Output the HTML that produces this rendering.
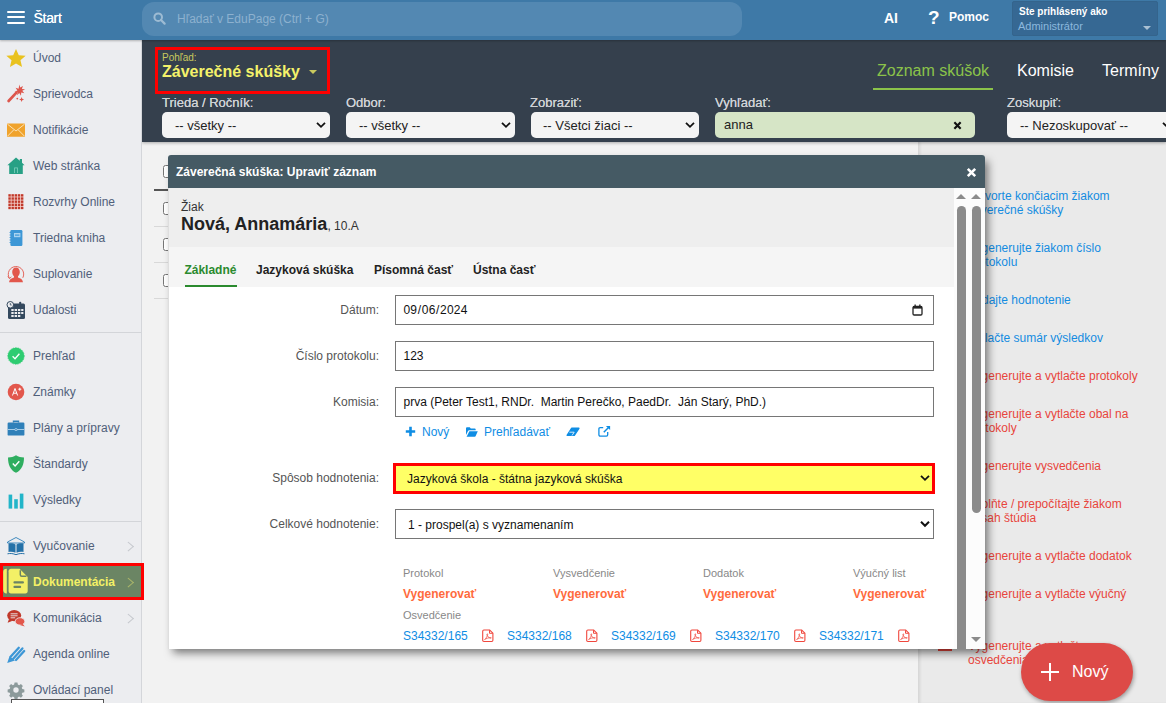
<!DOCTYPE html>
<html lang="sk">
<head>
<meta charset="utf-8">
<title>EduPage - Záverečné skúšky</title>
<style>
*{box-sizing:border-box}
html,body{margin:0;padding:0}
body{width:1166px;height:703px;overflow:hidden;position:relative;background:#f2f2f2;font-family:"Liberation Sans",Arial,sans-serif;font-size:12px;color:#333}
.abs{position:absolute}
/* top bar */
#top{position:absolute;left:0;top:0;width:1166px;height:40px;background:#3e79a7;z-index:5;box-shadow:0 1px 2px rgba(0,0,0,.25)}
#top .ham i{position:absolute;left:6.5px;width:18px;height:2px;background:#fff;border-radius:1px}
#top .start{position:absolute;left:33.5px;top:10px;font-size:14px;color:#fff;letter-spacing:-.3px;text-shadow:0 0 .6px #fff}
#search{position:absolute;left:142px;top:2px;width:600px;height:34px;border-radius:12px;background:#5388b2}
#search span{position:absolute;left:35px;top:10px;font-size:12px;color:#8db1cf}
#top .ai{position:absolute;left:884px;top:10px;font-size:14px;font-weight:bold;color:#fff}
#top .q{position:absolute;left:928px;top:7px;font-size:19px;font-weight:bold;color:#fff}
#top .pomoc{position:absolute;left:949px;top:10px;font-size:12px;font-weight:bold;color:#fff}
#user{position:absolute;left:1012px;top:1px;width:146px;height:35px;background:#366893;border-radius:2px;border:1px solid #34648c}
#user b{position:absolute;left:6px;top:4px;font-size:10px;color:#fff;white-space:nowrap}
#user span{position:absolute;left:5px;top:18px;font-size:11px;color:#8cb8de}
#user i{position:absolute;left:129.5px;top:24px;border:4px solid transparent;border-top:4px solid #a9c0d3;border-bottom:0}
/* sidebar */
#side{position:absolute;left:0;top:40px;width:142px;height:663px;background:#ecedf0;border-right:1px solid #d4d6da;z-index:4}
.it{position:absolute;left:0;width:141px;height:36px;color:#50607a;font-size:12px}
.it span{position:absolute;left:33px;top:11px;white-space:nowrap}
.it svg{position:absolute;left:6px;top:8px;width:20px;height:20px}
.it .ch{position:absolute;left:124.8px;top:14.7px;width:6.6px;height:6.6px;border-top:1.2px solid #c6c9ce;border-right:1.2px solid #c6c9ce;transform:scaleX(1.15) rotate(45deg)}
.sep{position:absolute;left:0;width:141px;height:1px;background:#d3d5d9}
/* header */
#head{position:absolute;left:142px;top:40px;width:1024px;height:102px;background:#35404d;z-index:2;box-shadow:0 1px 3px rgba(0,0,0,.3)}
.lbl{position:absolute;top:55px;font-size:13px;color:#cfd2d6;white-space:nowrap;text-shadow:0 0 .5px #cfd2d6}
.sel{position:absolute;top:72px;height:26px;background:#f4f4f4;border-radius:5px;font-size:13px;color:#222;padding:6px 0 0 13px;white-space:nowrap}
.sel svg,.fsel svg{position:absolute;right:4px;top:9px;width:10px;height:8px}
.cb{position:absolute;left:21px;width:13px;height:13px;border:1px solid #767676;border-radius:2.5px;background:#fff}
.rl{position:absolute;left:50px;font-size:12px;line-height:14px;white-space:nowrap}
.rl.b{color:#148ce1}.rl.r{color:#e8453c}
.tab{position:absolute;top:108px;font-size:12px;font-weight:bold;color:#222;white-space:nowrap}
.fl{position:absolute;left:0;width:210px;text-align:right;font-size:12px;color:#555;white-space:nowrap}
.fi{position:absolute;left:226px;width:539px;height:30px;border:1px solid #767676;background:#fff;font-size:12px;color:#111;padding:7px 0 0 7.5px}
.fsel{position:absolute;font-size:12px;color:#111;white-space:nowrap}
.lk{color:#0f8de4;font-size:12px;white-space:nowrap}
.sm{position:absolute;font-size:11px;color:#888;white-space:nowrap}
.vg{position:absolute;font-size:12px;font-weight:bold;color:#ff6b3d;white-space:nowrap}
.pdf{position:absolute;top:474px;width:12px;height:14px;overflow:visible}
.fi i{font-style:normal;padding:0 .5px}
</style>
</head>
<body>

<div id="top">
  <div class="ham"><i style="top:10.5px"></i><i style="top:16.3px"></i><i style="top:22.2px"></i></div>
  <div class="start">Štart</div>
  <div id="search">
    <svg class="abs" style="left:11px;top:10px" width="13" height="13" viewBox="0 0 13 13"><circle cx="5.2" cy="5.2" r="3.8" fill="none" stroke="#9dbbd3" stroke-width="2"/><path d="M8 8l3.6 3.6" stroke="#9dbbd3" stroke-width="2.2" stroke-linecap="round"/></svg>
    <span>Hľadať v EduPage (Ctrl + G)</span>
  </div>
  <div class="ai">AI</div>
  <div class="q">?</div>
  <div class="pomoc">Pomoc</div>
  <div id="user"><b>Ste prihlásený ako</b><span>Administrátor</span><i></i></div>
</div>

<div id="side">
  <div class="it" style="top:0"><svg viewBox="0 0 20 20"><path d="M10 1.6l2.5 5.6 6.1.6-4.6 4 1.4 6-5.4-3.2-5.4 3.2 1.4-6-4.6-4 6.1-.6z" fill="#e9c21f" transform="translate(-1.2 -.9) scale(1.12)"/></svg><span>Úvod</span></div>
  <div class="it" style="top:36px"><svg viewBox="0 0 20 20"><path d="M2.6 17L10.4 8.6" stroke="#dd564c" stroke-width="2.7" stroke-linecap="round"/><path d="M13.3 .6l.9 3 2.7-1.7-1 3 3.2.4-2.8 1.5 2 2.5-3.1-.8-.2 3.2-1.7-2.7-2.3 2.2.7-3.1-3.2-.3 2.9-1.4-1.8-2.6 3 1z" fill="#dd564c"/><path d="M15.6 13l.7 1.8 1.8.7-1.8.7-.7 1.8-.7-1.8-1.8-.7 1.8-.7z" fill="#dd564c"/><circle cx="11.3" cy="14.6" r=".9" fill="#dd564c"/></svg><span>Sprievodca</span></div>
  <div class="it" style="top:72px"><svg viewBox="0 0 20 20"><rect x="1" y="3.6" width="18" height="13.2" rx=".6" fill="#f0a32c"/><path d="M1.5 4.2l8.5 6.8 8.5-6.8M1.5 16.2l6.3-6.4M18.5 16.2l-6.3-6.4" stroke="#fbe3b8" stroke-width="1" fill="none"/></svg><span>Notifikácie</span></div>
  <div class="it" style="top:108px"><svg viewBox="0 0 20 20"><path d="M10 1.5L1.4 9.2h1.8V18h13.6V9.2h1.8L16 6.8V3h-2.2v1.8z" fill="#27a085"/><rect x="8.2" y="11.5" width="3.6" height="5.5" fill="#7fd0bd"/><rect x="9" y="12.3" width="2" height="4.7" fill="#27a085"/></svg><span>Web stránka</span></div>
  <div class="it" style="top:144px"><svg viewBox="0 0 20 20"><rect x="2.4" y="2.2" width="15" height="15" fill="#f2cfca"/><g fill="#c0392b"><rect x="2.40" y="2.20" width="2.35" height="2.35"/><rect x="5.55" y="2.20" width="2.35" height="2.35"/><rect x="8.70" y="2.20" width="2.35" height="2.35"/><rect x="11.85" y="2.20" width="2.35" height="2.35"/><rect x="15.00" y="2.20" width="2.35" height="2.35"/><rect x="2.40" y="5.35" width="2.35" height="2.35"/><rect x="5.55" y="5.35" width="2.35" height="2.35"/><rect x="8.70" y="5.35" width="2.35" height="2.35"/><rect x="11.85" y="5.35" width="2.35" height="2.35"/><rect x="15.00" y="5.35" width="2.35" height="2.35"/><rect x="2.40" y="8.50" width="2.35" height="2.35"/><rect x="5.55" y="8.50" width="2.35" height="2.35"/><rect x="8.70" y="8.50" width="2.35" height="2.35"/><rect x="11.85" y="8.50" width="2.35" height="2.35"/><rect x="15.00" y="8.50" width="2.35" height="2.35"/><rect x="2.40" y="11.65" width="2.35" height="2.35"/><rect x="5.55" y="11.65" width="2.35" height="2.35"/><rect x="8.70" y="11.65" width="2.35" height="2.35"/><rect x="11.85" y="11.65" width="2.35" height="2.35"/><rect x="15.00" y="11.65" width="2.35" height="2.35"/><rect x="2.40" y="14.80" width="2.35" height="2.35"/><rect x="5.55" y="14.80" width="2.35" height="2.35"/><rect x="8.70" y="14.80" width="2.35" height="2.35"/><rect x="11.85" y="14.80" width="2.35" height="2.35"/><rect x="15.00" y="14.80" width="2.35" height="2.35"/></g></svg><span>Rozvrhy Online</span></div>
  <div class="it" style="top:180px"><svg viewBox="0 0 20 20"><rect x="4.4" y="2" width="12" height="16" rx="1.2" fill="#3d97d6"/><rect x="8" y="5" width="6.4" height="4.2" fill="#a9d3f0"/><rect x="9" y="6.5" width="4.4" height="1.2" fill="#3d97d6"/><path d="M3.6 4.5h1.6M3.6 7h1.6M3.6 9.5h1.6M3.6 12h1.6M3.6 14.5h1.6" stroke="#3d97d6" stroke-width="1"/></svg><span>Triedna kniha</span></div>
  <div class="it" style="top:216px"><svg viewBox="0 0 20 20"><path d="M3.4 14.2A7.7 7.7 0 1 1 16.8 13.8" fill="none" stroke="#e2574c" stroke-width=".9"/><path d="M1.9 12.3l1.5 2.3 2-1.7" fill="none" stroke="#e2574c" stroke-width=".9"/><path d="M10 3.6c2.3 0 3.8 1.9 3.8 4.4 0 1.9-.8 3.5-1.8 4.3v1.1c2.6.7 4.7 2 5 4.8H3c.3-2.8 2.4-4.1 5-4.8v-1.1C7 11.5 6.2 9.9 6.2 8c0-2.5 1.5-4.4 3.8-4.4z" fill="#e2574c"/></svg><span>Suplovanie</span></div>
  <div class="it" style="top:252px"><svg viewBox="0 0 20 20"><rect x="2" y="3.5" width="17" height="15.5" rx="1.5" fill="#34495e"/><rect x="13.2" y="1.8" width="2" height="3.6" rx=".8" fill="#34495e"/><g fill="#ecedf0"><rect x="5.3" y="9" width="2.4" height="2"/><rect x="8.6" y="9" width="2.4" height="2"/><rect x="11.9" y="9" width="2.4" height="2"/><rect x="15.2" y="9" width="2.2" height="2"/><rect x="5.3" y="12" width="2.4" height="2"/><rect x="8.6" y="12" width="2.4" height="2"/><rect x="11.9" y="12" width="2.4" height="2"/><rect x="15.2" y="12" width="2.2" height="2"/><rect x="5.3" y="15" width="2.4" height="2"/><rect x="8.6" y="15" width="2.4" height="2"/><rect x="11.9" y="15" width="2.4" height="2"/></g><circle cx="4.3" cy="4.8" r="3.3" fill="#ecedf0" stroke="#34495e" stroke-width="1"/><path d="M4.3 3v2h1.4" stroke="#34495e" stroke-width=".8" fill="none"/></svg><span>Udalosti</span></div>
  <div class="sep" style="top:292px"></div>
  <div class="it" style="top:298px"><svg viewBox="0 0 20 20"><circle cx="10" cy="10" r="8.2" fill="#2ecc71" stroke="#2ecc71" stroke-width=".8" stroke-dasharray="1.5 1"/><path d="M6.6 10.3l2.4 2.4 4.4-5" stroke="#fff" stroke-width="1.3" fill="none"/></svg><span>Prehľad</span></div>
  <div class="it" style="top:334px"><svg viewBox="0 0 20 20"><circle cx="10" cy="10" r="8.3" fill="#e2574c"/><path d="M6.5 13.5l2.5-7 2.6 7M7.4 11.2h3.3M12.3 7.2h3M13.8 5.7v3" stroke="#fff" stroke-width="1" fill="none"/></svg><span>Známky</span></div>
  <div class="it" style="top:370px"><svg viewBox="0 0 20 20"><rect x="1.6" y="4.6" width="16.8" height="13" rx="1.2" fill="#2f80b9"/><path d="M7.5 4.6V3.2h5v1.4" stroke="#2f80b9" stroke-width="1.4" fill="none"/><rect x="1.6" y="11" width="16.8" height="1" fill="#a5cbe6"/><circle cx="10" cy="11.5" r="1.5" fill="#a5cbe6"/><circle cx="10" cy="11.5" r=".7" fill="#2f80b9"/></svg><span>Plány a prípravy</span></div>
  <div class="it" style="top:406px"><svg viewBox="0 0 20 20"><path d="M10 1.2c2.4 1.6 5 2.2 8 2.2 0 7-2.2 12.4-8 15.4C4.2 15.8 2 10.4 2 3.4c3 0 5.6-.6 8-2.2z" fill="#2fae60"/><path d="M6.8 9.6l2.3 2.4 4.2-4.8" stroke="#fff" stroke-width="1.4" fill="none"/></svg><span>Štandardy</span></div>
  <div class="it" style="top:442px"><svg viewBox="0 0 20 20"><rect x="2.6" y="4.6" width="3.6" height="14" fill="#22b5c9"/><rect x="8.2" y="9.2" width="3.6" height="9.4" fill="#22b5c9"/><rect x="13.8" y="3.6" width="3.6" height="15" fill="#22b5c9"/></svg><span>Výsledky</span></div>
  <div class="sep" style="top:481px"></div>
  <div class="it" style="top:488px"><svg viewBox="0 0 20 20"><path d="M10 1.5L1.5 6v1h17V6z" fill="none" stroke="#2f80b9" stroke-width=".9"/><path d="M2.5 7.5c2.6-.6 5.2-.2 7 1v8.3c-2-1-4.4-1.3-7-.8zM17.5 7.5c-2.6-.6-5.2-.2-7 1v8.3c2-1 4.4-1.3 7-.8z" fill="#2471a8"/><path d="M1.5 17.8c3-.6 5.6-.3 8.5.9 2.9-1.2 5.5-1.5 8.5-.9" stroke="#2471a8" stroke-width="1" fill="none"/></svg><span>Vyučovanie</span><i class="ch"></i></div>
  <div class="it doc" style="top:523px;width:144px;height:37px;background:#6b8564;border:3px solid #f00;z-index:3"><svg viewBox="0 0 26 26" style="left:0;top:2px;width:26px;height:26px"><path d="M3.8 .8C1.4 .8 .2 2 .2 4v18c0 2 1.2 3.4 3.6 3.4z" fill="#f3f066"/><path d="M8 .8h8.6L24.7 8.9V23c0 1.5-.9 2.4-2.4 2.4H8c-1.5 0-2.4-.9-2.4-2.4V3.2C5.6 1.7 6.5.8 8 .8z" fill="#f3f066"/><path d="M17.3 2.2v4.6c0 1 .5 1.5 1.5 1.5h4.6" fill="none" stroke="#6b8564" stroke-width="1.5"/><path d="M11.5 14.4h8.4M11.5 18.9h5.6" stroke="#6b8564" stroke-width="2.2" stroke-linecap="round"/></svg><span style="left:30px;top:9px;font-weight:bold;color:#f3f066">Dokumentácia</span><i class="ch" style="left:122.3px;top:12.7px;border-color:#a9b56a"></i></div>
  <div class="it" style="top:560px"><svg viewBox="0 0 20 20"><ellipse cx="8.2" cy="7.6" rx="7" ry="5.6" fill="#c0392b"/><path d="M3 11l-1.4 3.8 5-2z" fill="#c0392b"/><path d="M4.6 5.8h7M4.6 7.8h7M4.6 9.8h4.6" stroke="#ecedf0" stroke-width=".9"/><ellipse cx="14" cy="13.4" rx="4.8" ry="3.7" fill="#e2574c" stroke="#ecedf0" stroke-width=".8"/><path d="M16.5 15.8l2.3 2.8-5-1.6z" fill="#e2574c"/></svg><span>Komunikácia</span><i class="ch"></i></div>
  <div class="it" style="top:596px"><svg viewBox="0 0 20 20"><path d="M1.2 19l2.4-7 5.4 4.6z" fill="#3d97d6"/><path d="M4.8 12.6L12.8 3.8M7.2 14.8L16.4 4.4M10 16L18.2 7" stroke="#3d97d6" stroke-width="2.3" stroke-linecap="round" fill="none"/></svg><span>Agenda online</span></div>
  <div class="it" style="top:632px"><svg viewBox="0 0 20 20"><path d="M8.4 1.5h3.2l.5 2.3 1.5.7 2-1.3 2.2 2.2-1.3 2 .7 1.5 2.3.5v3.2l-2.3.5-.7 1.5 1.3 2-2.2 2.2-2-1.3-1.5.7-.5 2.3H8.4l-.5-2.3-1.5-.7-2 1.3-2.2-2.2 1.3-2-.7-1.5-2.3-.5V9.4l2.3-.5.7-1.5-1.3-2 2.2-2.2 2 1.3 1.5-.7z" fill="#8c9a9b" transform="translate(1.2 1.2) scale(.88)"/><circle cx="10" cy="10" r="2.7" fill="#ecedf0"/></svg><span>Ovládací panel</span></div>
  <div style="position:absolute;left:11px;top:659px;width:93px;height:6px;background:#fff;border:1px solid #555;border-bottom:0"></div>
</div>

<div id="head">
  <div class="abs" style="left:13px;top:7px;width:175px;height:47px;border:3px solid #f00"></div>
  <div class="abs" style="left:20px;top:12px;font-size:10px;color:#c9c95e">Pohľad:</div>
  <div class="abs" style="left:20px;top:23px;font-size:16px;font-weight:bold;color:#f4f26a;white-space:nowrap">Záverečné skúšky</div>
  <i class="abs" style="left:167px;top:30px;border:4px solid transparent;border-top:4px solid #c9c95e;border-bottom:0"></i>
  <div class="abs" style="left:735px;top:22px;font-size:16px;color:#8bc34a;white-space:nowrap">Zoznam skúšok</div>
  <div class="abs" style="left:731px;top:48px;width:120px;height:2px;background:#8bc34a"></div>
  <div class="abs" style="left:875px;top:22px;font-size:16px;color:#fff">Komisie</div>
  <div class="abs" style="left:960px;top:22px;font-size:16px;color:#fff">Termíny</div>
  <div class="lbl" style="left:20px">Trieda / Ročník:</div>
  <div class="lbl" style="left:204px">Odbor:</div>
  <div class="lbl" style="left:388px">Zobraziť:</div>
  <div class="lbl" style="left:573px">Vyhľadať:</div>
  <div class="lbl" style="left:865px">Zoskupiť:</div>
  <div class="sel" style="left:20px;width:168px">-- všetky --<svg viewBox="0 0 10 8"><path d="M1 1.8l4 4 4-4" stroke="#111" stroke-width="1.8" fill="none"/></svg></div>
  <div class="sel" style="left:204px;width:169px">-- všetky --<svg viewBox="0 0 10 8"><path d="M1 1.8l4 4 4-4" stroke="#111" stroke-width="1.8" fill="none"/></svg></div>
  <div class="sel" style="left:389px;width:168px;padding-left:12px">-- Všetci žiaci --<svg viewBox="0 0 10 8"><path d="M1 1.8l4 4 4-4" stroke="#111" stroke-width="1.8" fill="none"/></svg></div>
  <div class="sel" style="left:573px;width:260px;background:#d6e5c6;padding-left:9px;color:#222;font-size:13px;padding-top:5px">anna<svg viewBox="0 0 10 10" style="left:238px;right:auto;top:9px;width:9px;height:9px"><path d="M1.5 1.5l7 7M8.5 1.5l-7 7" stroke="#111" stroke-width="2.4"/></svg></div>
  <div class="sel" style="left:865px;width:180px">-- Nezoskupovať --<svg viewBox="0 0 10 8" style="right:auto;left:155px"><path d="M1 1.8l4 4 4-4" stroke="#111" stroke-width="1.8" fill="none"/></svg></div>
</div>

<div id="list" class="abs" style="left:142px;top:142px;width:776px;height:561px;background:#f2f2f2">
  <div class="abs" style="left:12px;top:47px;width:760px;height:2px;background:#555"></div>
  <div class="abs" style="left:12px;top:84px;width:760px;height:1px;background:#d8d8d8"></div>
  <div class="abs" style="left:12px;top:120px;width:760px;height:1px;background:#d8d8d8"></div>
  <div class="abs" style="left:12px;top:156px;width:760px;height:1px;background:#d8d8d8"></div>
  <i class="cb" style="top:23px"></i><i class="cb" style="top:60px"></i><i class="cb" style="top:96px"></i><i class="cb" style="top:132px"></i>
</div>

<div id="right" class="abs" style="left:918px;top:142px;width:248px;height:561px;background:#eaeaea;box-shadow:inset 3px 0 3px -1px rgba(0,0,0,.09)">
  <div class="rl b" style="top:47px">Vytvorte končiacim žiakom<br>záverečné skúšky</div>
  <div class="rl b" style="top:99px">Vygenerujte žiakom číslo<br>protokolu</div>
  <div class="rl b" style="top:151px">Zadajte hodnotenie</div>
  <div class="rl b" style="top:189px">Vytlačte sumár výsledkov</div>
  <div class="rl r" style="top:227px">Vygenerujte a vytlačte protokoly</div>
  <div class="rl r" style="top:265px">Vygenerujte a vytlačte obal na<br>protokoly</div>
  <div class="rl r" style="top:317px">Vygenerujte vysvedčenia</div>
  <div class="rl r" style="top:355px">Vyplňte / prepočítajte žiakom<br>obsah štúdia</div>
  <div class="rl r" style="top:407px">Vygenerujte a vytlačte dodatok</div>
  <div class="rl r" style="top:445px">Vygenerujte a vytlačte výučný<br>list</div>
  <div class="rl r" style="top:497px">Vygenerujte a vytlačte<br>osvedčenia</div>
  <div class="abs" style="left:20px;top:497px;width:14px;height:12px;background:#e8453c"></div>
</div>
<div id="fab" class="abs" style="left:1021px;top:643px;width:112px;height:58px;border-radius:29px;background:#dd4a47;box-shadow:1px 2px 4px rgba(0,0,0,.35);z-index:20">
  <i class="abs" style="left:20px;top:27.8px;width:17.5px;height:2.4px;background:#fff"></i><i class="abs" style="left:27.6px;top:20.3px;width:2.4px;height:17.5px;background:#fff"></i>
  <span class="abs" style="left:51px;top:20px;font-size:16px;color:#fff">Nový</span>
</div>
<div id="dlg" class="abs" style="left:168px;top:155px;width:817px;height:494px;background:#fff;border-radius:3px 3px 0 0;box-shadow:4px 5px 8px -1px rgba(0,0,0,.5);z-index:10;overflow:hidden">
  <div class="abs" style="left:0;top:0;width:817px;height:33px;background:#455a64"></div>
  <div class="abs" style="left:0;top:33px;width:1px;height:461px;background:#dedede"></div>
  <div class="abs" style="left:1px;top:0;width:816px;height:494px">
  <div class="abs" style="left:7px;top:10px;font-size:12px;font-weight:bold;color:#fff;white-space:nowrap">Záverečná skúška: Upraviť záznam</div>
  <svg class="abs" style="left:797px;top:12px" width="11" height="11" viewBox="0 0 11 11"><path d="M1.8 1.8l7.4 7.4M9.2 1.8l-7.4 7.4" stroke="#fff" stroke-width="2.6"/></svg>
  <div class="abs" style="left:0;top:33px;width:785px;height:59px;background:#eeeeee"></div>
  <div class="abs" style="left:0;top:92px;width:785px;height:40px;background:#f5f5f5"></div>
  <div class="abs" style="left:12px;top:45px;font-size:12px;color:#333">Žiak</div>
  <div class="abs" style="left:12px;top:59px;font-size:18px;font-weight:bold;color:#222;white-space:nowrap">Nová, Annamária<span style="font-size:12px;font-weight:normal;color:#333">, 10.A</span></div>
  <div class="tab" style="left:15.4px;color:#2a8a2e">Základné</div>
  <div class="abs" style="left:16px;top:130px;width:52px;height:2px;background:#2a8a2e"></div>
  <div class="tab" style="left:87px">Jazyková skúška</div>
  <div class="tab" style="left:205px">Písomná časť</div>
  <div class="tab" style="left:304px">Ústna časť</div>

  <div class="fl" style="top:148px">Dátum:</div>
  <div class="fi" style="top:140px"><span style="letter-spacing:.2px">09<i>/</i>06<i>/</i>2024</span><svg class="abs" style="left:516px;top:8px" width="11" height="12" viewBox="0 0 11 12"><rect x="1" y="2.5" width="9" height="8.5" rx="1.2" fill="none" stroke="#222" stroke-width="1.3"/><rect x="1" y="2" width="9" height="2.6" fill="#222"/><rect x="2.5" y=".5" width="1.3" height="2" fill="#222"/><rect x="7.2" y=".5" width="1.3" height="2" fill="#222"/></svg></div>
  <div class="fl" style="top:194px">Číslo protokolu:</div>
  <div class="fi" style="top:186px">123</div>
  <div class="fl" style="top:240px">Komisia:</div>
  <div class="fi" style="top:232px;white-space:pre">prva (Peter Test1, RNDr.  Martin Perečko, PaedDr.  Ján Starý, PhD.)</div>
  <svg class="abs" style="left:236px;top:271px" width="11" height="11" viewBox="0 0 11 11"><path d="M5.5 .8v9.4M.8 5.5h9.4" stroke="#0f8de4" stroke-width="2.6"/></svg><div class="abs lk" style="left:253px;top:270px">Nový</div>
  <div class="abs lk" style="left:315px;top:270px">Prehľadávať</div>
  <svg class="abs" style="left:297px;top:272px" width="12" height="10" viewBox="0 0 12 10"><path d="M0 1.2C0 .6.4.3 1 .3h2.8l1 1.2h4c.5 0 .9.3.9.9v.9H3.2c-.6 0-1 .3-1.3.9L0 8z" fill="#0f8de4"/><path d="M3.4 4.2h8.4L9.6 9.2c-.2.3-.5.5-.9.5H.6z" fill="#0f8de4"/></svg>
  <svg class="abs" style="left:397px;top:272px" width="14" height="10" viewBox="0 0 14 10"><path d="M5.6 1.3h7.3L8.3 8.3H1.1z" fill="#0f8de4" stroke="#0f8de4" stroke-width="1.4" stroke-linejoin="round"/><path d="M3.4 5.2h4.8l-2.2 3.3" stroke="#fff" stroke-width=".8" fill="none"/></svg>
  <svg class="abs" style="left:429px;top:270px" width="13" height="12" viewBox="0 0 13 12"><path d="M9.7 7v2.8c0 .8-.5 1.3-1.3 1.3H2.2c-.8 0-1.3-.5-1.3-1.3V3.9c0-.8.5-1.3 1.3-1.3h3" fill="none" stroke="#0f8de4" stroke-width="1.3"/><path d="M7.9 .9h4.2v4.2z" fill="#0f8de4"/><path d="M11 2L5.8 7.2" stroke="#0f8de4" stroke-width="1.5"/></svg>

  <div class="fl" style="top:316px">Spôsob hodnotenia:</div>
  <div class="fsel" style="left:224px;top:308px;width:542px;height:31px;border:3px solid #f00;background:#ffff66;padding:6px 0 0 11px">Jazyková škola - štátna jazyková skúška<svg viewBox="0 0 10 8" style="right:2px;top:8px"><path d="M1 1.8l4 4 4-4" stroke="#111" stroke-width="1.8" fill="none"/></svg></div>
  <div class="fl" style="top:362px">Celkové hodnotenie:</div>
  <div class="fsel" style="left:226px;top:354px;width:539px;height:30px;border:1px solid #767676;background:#fff;padding:8px 0 0 12px">1 - prospel(a) s vyznamenaním<svg viewBox="0 0 10 8" style="right:3px;top:10px"><path d="M1 1.8l4 4 4-4" stroke="#111" stroke-width="2" fill="none"/></svg></div>

  <div class="sm" style="left:234px;top:412px">Protokol</div><div class="vg" style="left:234px;top:432px">Vygenerovať</div>
  <div class="sm" style="left:384px;top:412px">Vysvedčenie</div><div class="vg" style="left:384px;top:432px">Vygenerovať</div>
  <div class="sm" style="left:534px;top:412px">Dodatok</div><div class="vg" style="left:534px;top:432px">Vygenerovať</div>
  <div class="sm" style="left:684px;top:412px">Výučný list</div><div class="vg" style="left:684px;top:432px">Vygenerovať</div>
  <div class="sm" style="left:234px;top:454px">Osvedčenie</div>
  <div class="abs lk" style="left:234px;top:474px">S34332/165</div>
  <div class="abs lk" style="left:338px;top:474px">S34332/168</div>
  <div class="abs lk" style="left:442px;top:474px">S34332/169</div>
  <div class="abs lk" style="left:546px;top:474px">S34332/170</div>
  <div class="abs lk" style="left:650px;top:474px">S34332/171</div>
  <svg class="pdf" style="left:313px"><g transform="translate(0 .5) scale(1 .95)"><path d="M1.9 .6h5.8L10.9 3.8v7.6c0 .7-.5 1.2-1.2 1.2H1.9c-.7 0-1.2-.5-1.2-1.2V1.8C.7 1.1 1.2.6 1.9.6z" fill="none" stroke="#f0473d" stroke-width="1.1"/><path d="M7.5.8v3.2h3.2" fill="none" stroke="#f0473d" stroke-width="1"/><path d="M2.6 10.6c1.5-1.4 2.9-3.7 3.1-5.4.1-.9-.9-.9-.8 0 .2 1.9 1.8 3.6 3.8 4 .8.1.8-.8 0-.7-2.1.1-4.4.9-6.1 2.1z" fill="none" stroke="#f0473d" stroke-width=".75"/></g></svg><svg class="pdf" style="left:417px"><g transform="translate(0 .5) scale(1 .95)"><path d="M1.9 .6h5.8L10.9 3.8v7.6c0 .7-.5 1.2-1.2 1.2H1.9c-.7 0-1.2-.5-1.2-1.2V1.8C.7 1.1 1.2.6 1.9.6z" fill="none" stroke="#f0473d" stroke-width="1.1"/><path d="M7.5.8v3.2h3.2" fill="none" stroke="#f0473d" stroke-width="1"/><path d="M2.6 10.6c1.5-1.4 2.9-3.7 3.1-5.4.1-.9-.9-.9-.8 0 .2 1.9 1.8 3.6 3.8 4 .8.1.8-.8 0-.7-2.1.1-4.4.9-6.1 2.1z" fill="none" stroke="#f0473d" stroke-width=".75"/></g></svg><svg class="pdf" style="left:521px"><g transform="translate(0 .5) scale(1 .95)"><path d="M1.9 .6h5.8L10.9 3.8v7.6c0 .7-.5 1.2-1.2 1.2H1.9c-.7 0-1.2-.5-1.2-1.2V1.8C.7 1.1 1.2.6 1.9.6z" fill="none" stroke="#f0473d" stroke-width="1.1"/><path d="M7.5.8v3.2h3.2" fill="none" stroke="#f0473d" stroke-width="1"/><path d="M2.6 10.6c1.5-1.4 2.9-3.7 3.1-5.4.1-.9-.9-.9-.8 0 .2 1.9 1.8 3.6 3.8 4 .8.1.8-.8 0-.7-2.1.1-4.4.9-6.1 2.1z" fill="none" stroke="#f0473d" stroke-width=".75"/></g></svg><svg class="pdf" style="left:625px"><g transform="translate(0 .5) scale(1 .95)"><path d="M1.9 .6h5.8L10.9 3.8v7.6c0 .7-.5 1.2-1.2 1.2H1.9c-.7 0-1.2-.5-1.2-1.2V1.8C.7 1.1 1.2.6 1.9.6z" fill="none" stroke="#f0473d" stroke-width="1.1"/><path d="M7.5.8v3.2h3.2" fill="none" stroke="#f0473d" stroke-width="1"/><path d="M2.6 10.6c1.5-1.4 2.9-3.7 3.1-5.4.1-.9-.9-.9-.8 0 .2 1.9 1.8 3.6 3.8 4 .8.1.8-.8 0-.7-2.1.1-4.4.9-6.1 2.1z" fill="none" stroke="#f0473d" stroke-width=".75"/></g></svg><svg class="pdf" style="left:729px"><g transform="translate(0 .5) scale(1 .95)"><path d="M1.9 .6h5.8L10.9 3.8v7.6c0 .7-.5 1.2-1.2 1.2H1.9c-.7 0-1.2-.5-1.2-1.2V1.8C.7 1.1 1.2.6 1.9.6z" fill="none" stroke="#f0473d" stroke-width="1.1"/><path d="M7.5.8v3.2h3.2" fill="none" stroke="#f0473d" stroke-width="1"/><path d="M2.6 10.6c1.5-1.4 2.9-3.7 3.1-5.4.1-.9-.9-.9-.8 0 .2 1.9 1.8 3.6 3.8 4 .8.1.8-.8 0-.7-2.1.1-4.4.9-6.1 2.1z" fill="none" stroke="#f0473d" stroke-width=".75"/></g></svg>

  </div><div class="abs" style="left:1px;top:0;width:816px;height:494px">
  <!-- scrollbars -->
  <div class="abs" style="left:785px;top:33px;width:31px;height:461px;background:#fcfcfc"></div>
  <i class="abs" style="left:787px;top:39px;border:5px solid transparent;border-bottom:5px solid #8b8b8b;border-top:0"></i>
  <i class="abs" style="left:802px;top:39px;border:5px solid transparent;border-bottom:5px solid #8b8b8b;border-top:0"></i>
  <div class="abs" style="left:788px;top:51px;width:9px;height:460px;background:#8b8b8b;border-radius:4.5px"></div>
  <div class="abs" style="left:803px;top:51px;width:9px;height:307px;background:#8b8b8b;border-radius:4.5px"></div>
  <i class="abs" style="left:802px;top:482px;border:5px solid transparent;border-top:5px solid #8b8b8b;border-bottom:0"></i>
</div>

</body>
</html>
